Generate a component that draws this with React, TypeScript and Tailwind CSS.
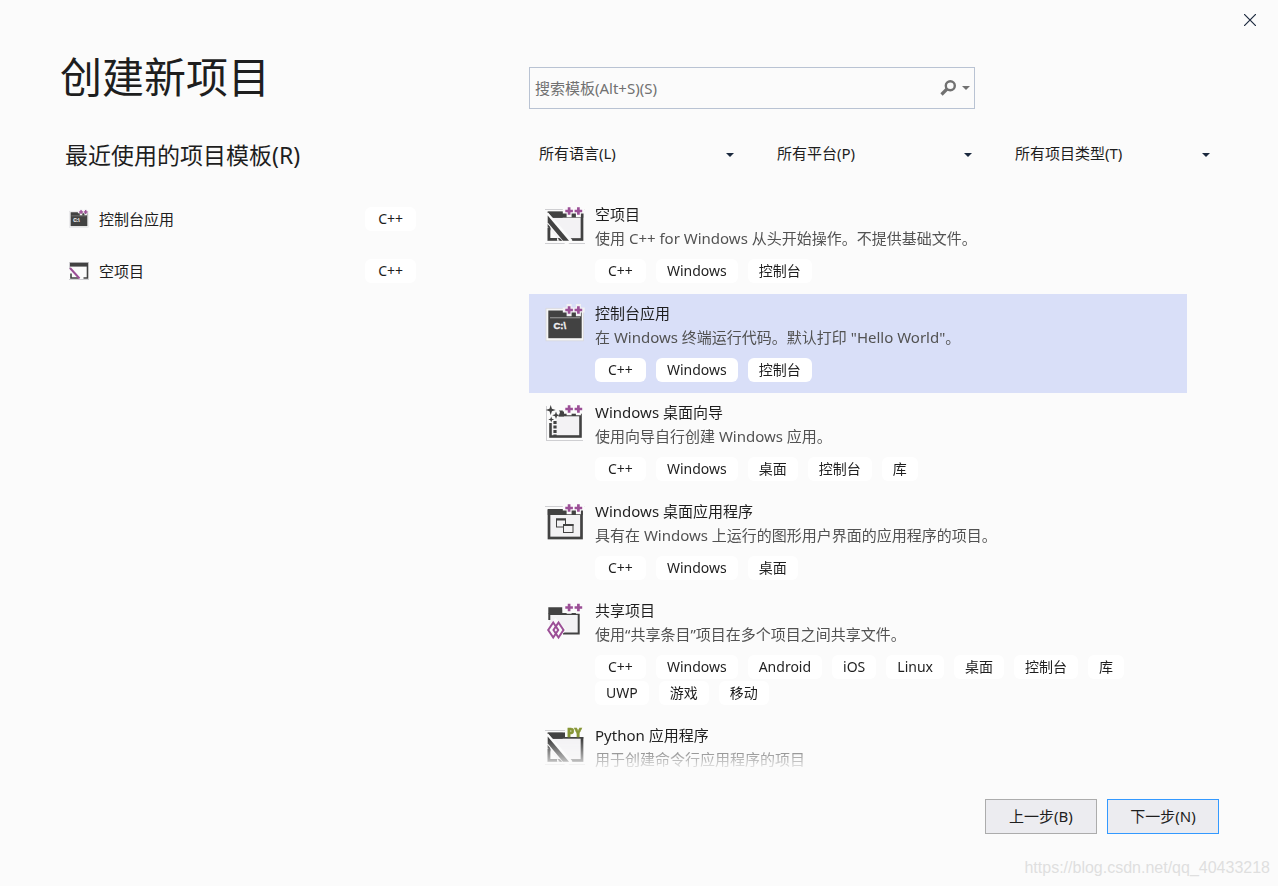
import React, { useState } from 'react';

interface Template {
  id: string;
  name: string;
  description: string;
  tags: string[];
  icon: React.ReactNode;
}

interface IconProps {
  className?: string;
}

// The "++" badge sitting on the top right corner of the C++ icons
function PlusPlus({ halo = '#fbfbfb', y = 6 }: { halo?: string; y?: number }) {
  const d = `M20.300 ${y}h7.600M24.100 ${y - 3.8}v7.600M29.600 ${y}h7.600M33.400 ${y - 3.8}v7.600`;
  return (
    <>
      <path d={d} stroke={halo} strokeWidth="5" strokeLinecap="square" fill="none" />
      <path d={d} stroke="#9b4f96" strokeWidth="2.700" fill="none" />
    </>
  );
}

function EmptyWindow() {
  return (
    <>
      <path d="M0 4.500h40M0 38.500h40" stroke="#cfcfd2" strokeWidth="1" />
      <rect x="4" y="8" width="33" height="26.500" fill="#f3f2f4" stroke="#424242" strokeWidth="2.700" />
      <rect x="2.700" y="6.700" width="35.600" height="6" fill="#424242" />
      <path d="M0 10L24.500 38" stroke="#fbfbfb" strokeWidth="8" />
      <path d="M2.700 6.700h15v6H8z" fill="#424242" />
      <path d="M2.700 22l12 13.700h-12z" fill="#fbfbfb" />
      <path d="M4 23v11.300h8" fill="none" stroke="#424242" strokeWidth="2.700" />
      <path d="M2.700 10.500l21.300 25.200h-6L2.700 17.500z" fill="#424242" />
    </>
  );
}

function EmptyIcon({ className }: IconProps) {
  return (
    <svg viewBox="0 0 40 40" className={className} aria-hidden="true">
      <EmptyWindow />
      <PlusPlus />
    </svg>
  );
}

function SmallEmptyIcon({ className }: IconProps) {
  return (
    <svg viewBox="0 0 20 20" className={className} aria-hidden="true">
      <path d="M0 1.500h20M0 18.500h20M.5 1v7" stroke="#cfcfd2" strokeWidth="1" />
      <path d="M1 2.500h17.500v14.500h-4M9 17H2v-4.500" fill="none" stroke="#424242" strokeWidth="1.600" />
      <path d="M1 3.800h18" stroke="#424242" strokeWidth="3.600" />
      <path d="M1 7l9.500 10.500" stroke="#9b4f96" strokeWidth="2" />
    </svg>
  );
}

function ConsoleIcon({ className }: IconProps) {
  return (
    <svg viewBox="0 0 40 40" className={className} aria-hidden="true">
      <rect x="1" y="4.300" width="37.500" height="32.500" fill="#f6f6f6" stroke="#d8d8dc" strokeWidth="0.800" />
      <rect x="3.300" y="6.500" width="33.400" height="27.700" fill="#424242" />
      <path d="M5 13.700h30" stroke="#8a8a8a" strokeWidth="1.300" />
      <text
        x="8.500"
        y="25"
        fontSize="9.500"
        fontWeight="700"
        fill="#f0eff1"
        stroke="#f0eff1"
        strokeWidth="0.400"
        className="font-['Liberation_Sans']"
      >
        C:\
      </text>
      <PlusPlus halo="#f2f2f4" />
    </svg>
  );
}

function WizardIcon({ className }: IconProps) {
  return (
    <svg viewBox="0 0 40 40" className={className} aria-hidden="true">
      <path d="M1.500 3v35M1 37.500h37" stroke="#cfcfd2" strokeWidth="1" />
      <rect x="5.500" y="12" width="30" height="21.500" fill="#f3f2f4" stroke="#424242" strokeWidth="2.600" />
      <path d="M12 7.500h7v6h-7z" fill="#424242" />
      <path d="M2 3h9l4 6-2 6-5 5H2z" fill="#fbfbfb" />
      <path d="M10 18v15" stroke="#424242" strokeWidth="3.200" strokeDasharray="3 1.500" />
      <path d="M5.700 2l1.200 3.800L10.700 7 6.900 8.200 5.700 12 4.500 8.200.7 7l3.800-1.200z" fill="#424242" />
      <path d="M11 8.500l1 2.800 2.800 1-2.800 1-1 2.800-1-2.800-2.800-1 2.800-1z" fill="#424242" />
      <path d="M6.200 13.500l.8 2.200 2.200.8-2.200.8-.8 2.200-.8-2.200-2.200-.8 2.200-.8z" fill="#424242" />
      <PlusPlus />
    </svg>
  );
}

function DesktopIcon({ className }: IconProps) {
  return (
    <svg viewBox="0 0 40 40" className={className} aria-hidden="true">
      <path d="M0 4.500h40" stroke="#cfcfd2" strokeWidth="1" />
      <rect x="4" y="9" width="32.500" height="27" fill="#f3f2f4" stroke="#424242" strokeWidth="2.700" />
      <rect x="2.700" y="7" width="35" height="6" fill="#424242" />
      <rect x="11.500" y="17" width="9" height="8" fill="#f3f2f4" stroke="#424242" />
      <path d="M11 17.500h10" stroke="#424242" strokeWidth="2" />
      <rect x="18.500" y="22.500" width="9.500" height="8" fill="#f3f2f4" stroke="#424242" />
      <path d="M18 23h10.500" stroke="#424242" strokeWidth="2" />
      <PlusPlus />
    </svg>
  );
}

function SharedIcon({ className }: IconProps) {
  return (
    <svg viewBox="0 0 40 40" className={className} aria-hidden="true">
      <path d="M4 12.500h30v20.500H4z" fill="#f3f2f4" />
      <path d="M4.300 19v-6h29.400v19.500H18" fill="none" stroke="#424242" strokeWidth="2" />
      <path d="M3.300 6.300h14v6.200h-14z" fill="#424242" />
      <path d="M10.500 17l11 12-11 11H0V28z" fill="#fbfbfb" />
      <path
        d="M8.200 21.500l5 7.500-5 7.500-5-7.500zM13.500 21.500l5 7.500-5 7.500-5-7.500z"
        fill="none"
        stroke="#9b4f96"
        strokeWidth="2"
      />
      <PlusPlus y={6.5} />
    </svg>
  );
}

function PythonIcon({ className }: IconProps) {
  return (
    <svg viewBox="0 0 40 40" className={className} aria-hidden="true">
      <EmptyWindow />
      <path d="M20 0h20v11H20z" fill="#fbfbfb" />
      <text
        x="22"
        y="11"
        fontSize="11.500"
        fontWeight="800"
        fill="#879636"
        stroke="#879636"
        strokeWidth="0.500"
        className="font-['Open_Sans']"
      >
        PY
      </text>
    </svg>
  );
}

function Caret({ className }: IconProps) {
  return (
    <svg viewBox="0 0 8 4" className={className} aria-hidden="true">
      <path d="M0 0h8L4 4z" fill="currentColor" />
    </svg>
  );
}

const templates: Template[] = [
  {
    id: 'empty',
    name: '空项目',
    description: '使用 C++ for Windows 从头开始操作。不提供基础文件。',
    tags: ['C++', 'Windows', '控制台'],
    icon: <EmptyIcon className="size-10" />,
  },
  {
    id: 'console',
    name: '控制台应用',
    description: '在 Windows 终端运行代码。默认打印 "Hello World"。',
    tags: ['C++', 'Windows', '控制台'],
    icon: <ConsoleIcon className="size-10" />,
  },
  {
    id: 'wizard',
    name: 'Windows 桌面向导',
    description: '使用向导自行创建 Windows 应用。',
    tags: ['C++', 'Windows', '桌面', '控制台', '库'],
    icon: <WizardIcon className="size-10" />,
  },
  {
    id: 'desktop',
    name: 'Windows 桌面应用程序',
    description: '具有在 Windows 上运行的图形用户界面的应用程序的项目。',
    tags: ['C++', 'Windows', '桌面'],
    icon: <DesktopIcon className="size-10" />,
  },
  {
    id: 'shared',
    name: '共享项目',
    description: '使用“共享条目”项目在多个项目之间共享文件。',
    tags: ['C++', 'Windows', 'Android', 'iOS', 'Linux', '桌面', '控制台', '库', 'UWP', '游戏', '移动'],
    icon: <SharedIcon className="size-10" />,
  },
  {
    id: 'python',
    name: 'Python 应用程序',
    description: '用于创建命令行应用程序的项目',
    tags: [],
    icon: <PythonIcon className="size-10" />,
  },
];

const recent = [
  { id: 'console', name: '控制台应用', tag: 'C++', icon: <ConsoleIcon className="size-5" /> },
  { id: 'empty', name: '空项目', tag: 'C++', icon: <SmallEmptyIcon className="size-5" /> },
];

const filters = [
  { id: 'language', label: '所有语言(L)' },
  { id: 'platform', label: '所有平台(P)' },
  { id: 'type', label: '所有项目类型(T)' },
];

function Tag({ children }: { children: string }) {
  // C++ gets a little more room than the other tags
  return (
    <span
      className={`h-6 rounded-md bg-white text-sm leading-6 text-[#1e1e1e] ${
        children === 'C++' ? 'px-[13px]' : 'px-[11px]'
      }`}
    >
      {children}
    </span>
  );
}

export default function App() {
  const [selected, setSelected] = useState('console');
  const [query, setQuery] = useState('');

  return (
    <div className="relative flex h-screen flex-col bg-[#fbfbfb] font-['Noto_Sans','Noto_Sans_CJK_SC',sans-serif] text-[15px] text-[#1e1e1e]">
      <header className="flex h-10 shrink-0 justify-end">
        <button aria-label="关闭" className="flex w-14 items-center justify-center text-[#1b293e]">
          <svg viewBox="0 0 12 12" className="size-3" aria-hidden="true">
            <path d="M0 0l12 12M12 0L0 12" stroke="currentColor" strokeWidth="1.200" />
          </svg>
        </button>
      </header>

      <main className="grid min-h-0 flex-1 grid-cols-[469px_minmax(0,1fr)] pr-[59px] pl-[60px]">
        <section>
          <h1 className="mt-[7px] text-[42px] leading-[60px]">创建新项目</h1>
          <h2 className="mt-8 pl-[5px] text-[23px] leading-8">最近使用的项目模板(R)</h2>
          <ul className="mt-[22px] w-[356px] pl-[9px]">
            {recent.map((item) => (
              <li key={item.id}>
                <button
                  onClick={() => setSelected(item.id)}
                  className="flex h-[52px] w-full items-center gap-[10px] text-left"
                >
                  {item.icon}
                  <span className="flex-1">{item.name}</span>
                  <Tag>{item.tag}</Tag>
                </button>
              </li>
            ))}
          </ul>
        </section>

        <section className="flex min-h-0 flex-col">
          <div className="mt-[27px] flex h-[42px] max-w-[446px] shrink-0 items-center border border-[#b9c3d3] text-[#717171]">
            <input
              type="text"
              aria-label="搜索模板"
              placeholder="搜索模板(Alt+S)(S)"
              value={query}
              onChange={(e) => setQuery(e.target.value)}
              className="min-w-0 flex-1 bg-transparent px-[5px] outline-none placeholder:text-[#717171]"
            />
            <button aria-label="搜索" className="px-[6px]">
              <svg viewBox="0 0 16 16" className="size-4" aria-hidden="true">
                <circle cx="10.300" cy="5.700" r="4.500" fill="none" stroke="currentColor" strokeWidth="2.400" />
                <path d="M7.500 8.500l-6 6" stroke="currentColor" strokeWidth="3.200" />
              </svg>
            </button>
            <button aria-label="搜索选项" className="pr-1">
              <Caret className="h-1 w-2" />
            </button>
          </div>

          <div className="mt-7 grid shrink-0 grid-cols-3 gap-6">
            {filters.map((filter) => (
              <div key={filter.id} className="relative flex items-center">
                <select
                  aria-label={filter.label}
                  className="h-9 w-full appearance-none bg-transparent pr-6 pb-1 pl-[10px] outline-none"
                >
                  <option>{filter.label}</option>
                </select>
                <Caret className="pointer-events-none absolute right-[9px] h-1 w-2 text-[#1b293e]" />
              </div>
            ))}
          </div>

          <ul className="mt-[22px] mr-8 min-h-0 flex-1 overflow-hidden mask-[linear-gradient(to_bottom,black_calc(100%-32px),transparent)]">
            {templates.map((item) => (
              <li key={item.id}>
                <button
                  onClick={() => setSelected(item.id)}
                  aria-pressed={selected === item.id}
                  className={`flex w-full items-start gap-[10px] px-4 pt-[7px] text-left ${
                    selected === item.id ? 'bg-[#d9dff8]' : ''
                  }`}
                >
                  <span className="mt-[3px] shrink-0">{item.icon}</span>
                  <span className="flex min-w-0 flex-1 flex-col">
                    <span className="leading-6">{item.name}</span>
                    <span className="leading-6 text-[#525252]">{item.description}</span>
                    {item.tags.length > 0 && (
                      <span className="mt-[9px] mb-[11px] flex flex-wrap gap-x-[10px] gap-y-[2px]">
                        {item.tags.map((tag) => (
                          <Tag key={tag}>{tag}</Tag>
                        ))}
                      </span>
                    )}
                  </span>
                </button>
              </li>
            ))}
          </ul>
        </section>
      </main>

      <footer className="mt-[27px] mb-[52px] flex shrink-0 justify-end gap-[10px] pr-[59px]">
        <button className="h-[35px] w-28 border border-[#acacac] bg-[#ececf0]">上一步(B)</button>
        <button className="h-[35px] w-28 border border-[#3399ff] bg-[#ececf0]">下一步(N)</button>
      </footer>

      <div className="absolute right-2 bottom-2 font-['Liberation_Sans',sans-serif] text-base leading-5 text-[#dfdfdf]">
        https://blog.csdn.net/qq_40433218
      </div>
    </div>
  );
}
